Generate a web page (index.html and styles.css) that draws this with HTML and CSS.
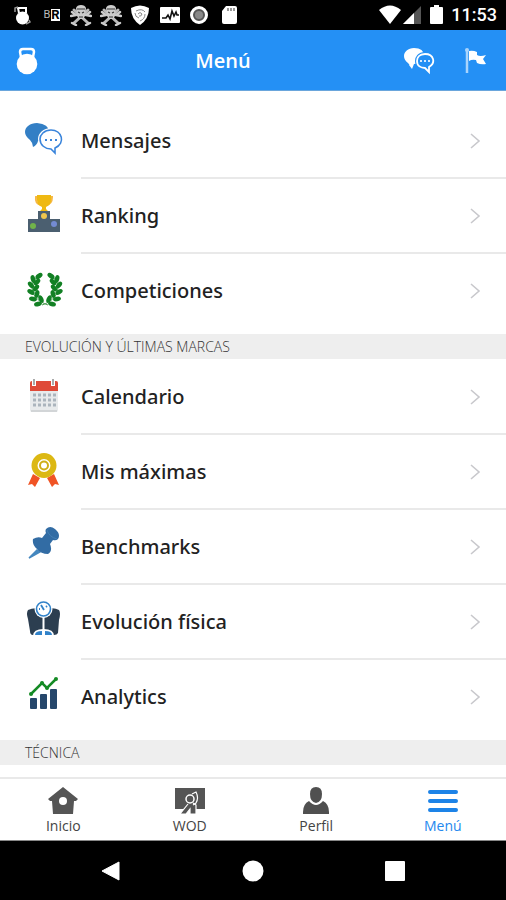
FILE: index.html
```html
<!DOCTYPE html>
<html lang="es">
<head>
<meta charset="utf-8">
<meta name="viewport" content="width=device-width, initial-scale=1">
<title>Menú</title>
<link rel="stylesheet" href="styles.css">
</head>
<body>
<svg class="defs" aria-hidden="true">
  <symbol id="chevron" viewBox="0 0 12 18"><path d="M2 2l8 7-8 7" fill="none" stroke="#c8c8cc" stroke-width="1.6"/></symbol>
  <symbol id="skull" viewBox="0 0 22 22">
    <path d="M4 6l14 13M18 6L4 19" stroke="#bbb" stroke-width="3" stroke-linecap="round"/>
    <path d="M2 8l4 3M20 8l-4 3M1 12l5-1M21 12l-5-1M2 19l4 2M20 19l-4 2" stroke="#ccc" stroke-width="2.500" stroke-linecap="round"/>
    <path d="M6 4q1-3 5-3t5 3l-1 8-2 3H9l-2-3z" fill="#ccc"/>
    <path d="M7 5h8M8 8l2 1M14 8l-2 1M9 13h4" stroke="#333" stroke-width="1.200"/>
  </symbol>
</svg>

<div class="status">
  <div class="status-apps">
    <svg viewBox="0 0 22 22"><path d="M8 9L7 4h8v5" fill="none" stroke="#fff" stroke-width="2"/><circle cx="11.500" cy="14" r="6.500" fill="#fff"/><path d="M4 8V4l3-1M18 16l1 2-4 2" fill="none" stroke="#999" stroke-width="1.500"/></svg>
    <span class="badge-br"><span>B</span><b>R</b></span>
    <svg viewBox="0 0 22 22"><use href="#skull"/></svg>
    <svg viewBox="0 0 22 22"><use href="#skull"/></svg>
    <svg viewBox="0 0 22 22"><path d="M2 4q9-5 18 0 0 11-9 17Q2 15 2 4z" fill="#fff"/><path d="M7 7q6-3 9 1M16 10q0 5-5 7M6 9q0 4 4 5M9 10q2-3 4 0-1 3-3 2" fill="none" stroke="#888" stroke-width="1"/></svg>
    <svg viewBox="0 0 22 22"><rect x="1" y="3" width="20" height="16" rx="1" fill="#fff"/><path d="M3 14h4l2-3 2 4 2-8 2 5 2-4 1 3h2" fill="none" stroke="#111" stroke-width="1.600"/></svg>
    <svg viewBox="0 0 22 22"><circle cx="11" cy="11" r="7.500" fill="#555" stroke="#fff" stroke-width="3"/><circle cx="11" cy="11" r="4" fill="#888"/></svg>
    <svg viewBox="0 0 22 22"><path d="M8 2h9q2 0 2 2v14q0 2-2 2H6q-2 0-2-2V7z" fill="#fff"/><path d="M10 4v3M13 4v3M16 4v3" stroke="#777" stroke-width="1.500"/></svg>
  </div>
  <div class="status-system">
    <svg class="wifi" viewBox="0 0 22 20"><path d="M0 5q11-9 22 0L11 19z" fill="#fff"/></svg>
    <svg class="signal" viewBox="0 0 18 20"><path d="M18 1v18H0z" fill="#555"/><path d="M11 8v11H0z" fill="#fff"/></svg>
    <svg class="battery" viewBox="0 0 13 20"><path d="M4 0h5v2h3q1 0 1 1v15q0 1-1 1H1q-1 0-1-1V3q0-1 1-1h3z" fill="#fff"/></svg>
    <time>11:53</time>
  </div>
</div>

<header class="header">
  <button class="icon-button" aria-label="Entrenamiento"><svg class="kettle" viewBox="0 0 22 28"><path d="M5 10L4 5q0-3 3-3h8q3 0 3 3l-1 5" fill="none" stroke="#fff" stroke-width="2.500"/><circle cx="11" cy="17" r="10.300" fill="#fff"/></svg></button>
  <h1>Menú</h1>
  <button class="icon-button" aria-label="Mensajes"><svg class="chat" viewBox="0 0 31 28"><path d="M10 1C4 1 0 5 0 9q0 4 4 7 2 2 1 2l3 4 2-5q9 0 10-8 0-8-10-8z" fill="#fff"/><path d="M21 7c-6 0-8 4-8 7 0 5 4 7 8 7l4 4v-5c7-4 5-13-4-13z" fill="#2490f5" stroke="#2490f5" stroke-width="4"/><path d="M21 7c-6 0-8 4-8 7 0 5 4 7 8 7l4 4v-5c7-4 5-13-4-13z" fill="none" stroke="#fff" stroke-width="1.800"/><path d="M16 14h2M20 14h2M24 14h2" stroke="#d5eaff" stroke-width="2"/></svg></button>
  <button class="icon-button" aria-label="Marcas"><svg class="flag" viewBox="0 0 22 28"><path d="M2 3v23" stroke="#a9d4fc" stroke-width="2.500"/><circle cx="2" cy="3" r="2" fill="#a9d4fc"/><path d="M4 4q4-1 8 1v3q3 2 9 0l-3 4 3 5q-5 1-9-1l-1-3q-4-1-7 1z" fill="#fff"/></svg></button>
</header>

<main class="content">
  <ul class="menu">
    <li><a class="row" href="#mensajes">
      <svg class="pic" viewBox="0 0 38 38"><path d="M12 4C5 4 0 8 0 13q0 4 5 8 3 3 3 7 4-2 5-6 11-1 11-9 0-8-12-9z" fill="#337fc5"/><path d="M26 11c-7 0-11 5-11 9 0 6 5 10 11 10l4 4v-5c11-5 7-18-4-18z" fill="#fff" stroke="#fff" stroke-width="4"/><path d="M26 11c-7 0-11 5-11 9 0 6 5 10 11 10l4 4v-5c11-5 7-18-4-18z" fill="#fff" stroke="#3984db" stroke-width="1.600"/><path d="M20 21h2M25 21h2M30 21h2" stroke="#3984db" stroke-width="2"/></svg>
      <span class="label">Mensajes</span><svg class="chevron"><use href="#chevron"/></svg></a></li>
    <li><a class="row" href="#ranking">
      <svg class="pic" viewBox="0 0 38 38"><path d="M13 3h-2q-1 7 5 8M24 3h3q0 7-6 8" fill="none" stroke="#f6b846" stroke-width="2"/><path d="M12 1h14v5q0 5-5 7v2l3 3H14l3-3v-2q-5-2-5-7z" fill="#efb912"/><path d="M3 25h10v-8h12v8h10v13H3z" fill="#4b5f70"/><circle cx="19" cy="22" r="3" fill="#efc64e"/><circle cx="8" cy="32" r="3" fill="#71b34a"/><circle cx="29" cy="30" r="3" fill="#748bd2"/></svg>
      <span class="label">Ranking</span><svg class="chevron"><use href="#chevron"/></svg></a></li>
    <li><a class="row" href="#competiciones">
      <svg class="pic" viewBox="0 0 38 38">
        <g id="branch"><path d="M12 8C4 16 5 30 23 36" fill="none" stroke="#4a9b51"/>
          <g fill="#128024"><ellipse cx="14" cy="7" rx="4" ry="2.300" transform="rotate(-35 14 7)"/><ellipse cx="8" cy="10" rx="4" ry="2.300" transform="rotate(75 8 10)"/><ellipse cx="12" cy="13" rx="4" ry="2.300" transform="rotate(-45 12 13)"/><ellipse cx="6" cy="16" rx="4" ry="2.300" transform="rotate(50 6 16)"/><ellipse cx="11" cy="19" rx="4" ry="2.300" transform="rotate(-50 11 19)"/><ellipse cx="6" cy="23" rx="4" ry="2.300" transform="rotate(30 6 23)"/><ellipse cx="12" cy="25" rx="4" ry="2.300" transform="rotate(-75 12 25)"/><ellipse cx="8" cy="30" rx="4" ry="2.300" transform="rotate(10 8 30)"/><ellipse cx="16" cy="30" rx="4" ry="2.300" transform="rotate(65 16 30)"/><ellipse cx="13" cy="35" rx="4" ry="2.300" transform="rotate(-15 13 35)"/></g></g>
        <use href="#branch" transform="matrix(-1 0 0 1 40 0)"/></svg>
      <span class="label">Competiciones</span><svg class="chevron"><use href="#chevron"/></svg></a></li>
  </ul>

  <h2>EVOLUCIÓN Y ÚLTIMAS MARCAS</h2>
  <ul class="menu">
    <li><a class="row" href="#calendario">
      <svg class="pic" viewBox="0 0 38 38"><rect x="5" y="6" width="28" height="31" rx="2" fill="#e8ebec"/><path d="M5 16V8q0-2 2-2h24q2 0 2 2v8z" fill="#df4a38"/><path d="M9 4v7M28 4v7" stroke="#fff" stroke-width="4"/><path d="M9 4v6M28 4v6" stroke="#a9aaaa" stroke-width="2"/><path d="M8 20h23M8 25h23M8 30h23" stroke="#abb5bd" stroke-width="3" stroke-dasharray="3 2"/><path d="M6 36h26" stroke="#d2d5d7" stroke-width="2"/></svg>
      <span class="label">Calendario</span><svg class="chevron"><use href="#chevron"/></svg></a></li>
    <li><a class="row" href="#maximas">
      <svg class="pic" viewBox="0 0 38 38"><path d="M8 24l7 4-5 9-3-3-4 1zM29 24l-7 4 5 9 3-3 4 1z" fill="#f05425"/><circle cx="19" cy="15.500" r="9.500" fill="#fff" stroke="#dcb813" stroke-width="6"/><circle cx="19" cy="15.500" r="4" fill="#fff" stroke="#cfae18" stroke-width="2"/></svg>
      <span class="label">Mis máximas</span><svg class="chevron"><use href="#chevron"/></svg></a></li>
    <li><a class="row" href="#benchmarks">
      <svg class="pic" viewBox="0 0 38 38"><path d="M12 25L4 33l11-6z" fill="#4487bf" stroke="#4487bf" stroke-width="1.500"/><path d="M21 4q4-4 9 0 6 5 3 10-2 2-5 1l-3 4q3 7-2 10-7 0-11-5-5-4-4-10 5-3 9-1l4-5q-1-2 0-4z" fill="#326ca4"/><path d="M22 5q2 7 10 9" fill="none" stroke="#447fb3" stroke-width="1"/></svg>
      <span class="label">Benchmarks</span><svg class="chevron"><use href="#chevron"/></svg></a></li>
    <li><a class="row" href="#evolucion">
      <svg class="pic" viewBox="0 0 38 38"><path d="M3 10q6-3 13-1h6q7-2 12 1 2 3 0 10l-1 13q-1 2-4 2H8q-3 0-3-4L3 19q-2-6 0-9z" fill="#2c3e50"/><path d="M18.500 16v14" stroke="#fff" stroke-width="2"/><path d="M8 36q0-7 10.500-7T29 36z" fill="#fff"/><path d="M10 35q0-4 7-4v4zM20 35v-4q7 0 7 4z" fill="#3182c9"/><circle cx="18.500" cy="9" r="9" fill="#fff"/><circle cx="18.500" cy="9" r="7" fill="#fff" stroke="#3182c9" stroke-width="1.600"/><path d="M16 5l3 5M22 6l-1 1M14 9h1" stroke="#3182c9" stroke-width="1.800"/></svg>
      <span class="label">Evolución física</span><svg class="chevron"><use href="#chevron"/></svg></a></li>
    <li><a class="row" href="#analytics">
      <svg class="pic" viewBox="0 0 38 38"><rect x="5" y="23" width="7" height="11" rx="1" fill="#26476b"/><rect x="15" y="19" width="7" height="15" rx="1" fill="#26476b"/><rect x="25" y="14" width="7" height="20" rx="1" fill="#26476b"/><path d="M6 19L17 8l5 5L31 4" fill="none" stroke="#158b25" stroke-width="2.500"/><g fill="#158b25"><circle cx="6" cy="19" r="2"/><circle cx="17" cy="8" r="2"/><circle cx="22" cy="13" r="2"/><circle cx="31" cy="4" r="2"/></g></svg>
      <span class="label">Analytics</span><svg class="chevron"><use href="#chevron"/></svg></a></li>
  </ul>
  <h2>TÉCNICA</h2>
</main>

<nav class="tabs" aria-label="Principal">
  <a href="#inicio"><svg viewBox="0 0 32 30"><path d="M16 1l15 12-2 2h-2l-1 13H6L5 15H3l-2-2z" fill="#555"/><circle cx="16" cy="15" r="4" fill="#fff"/></svg>Inicio</a>
  <a href="#wod"><svg viewBox="0 0 32 30"><path d="M1 2h30v21H1z" fill="#555"/><path d="M14 18L6 28h6l4-5v5h6v-9l-3-2" fill="#555" stroke="#fff" stroke-width="1.200"/><circle cx="16" cy="13" r="4" fill="#555" stroke="#fff" stroke-width="1.500"/><path d="M18 8l4-2q3 6 0 11l-3 2" fill="none" stroke="#fff" stroke-width="1.200"/></svg>WOD</a>
  <a href="#perfil"><svg viewBox="0 0 32 30"><path d="M16 1q6 0 6 7 0 8-6 9-6-1-6-9 0-7 6-7z" fill="#505050"/><path d="M9 15q7 8 14 0 6 3 6 11v2H3v-2q0-8 6-11z" fill="#505050"/></svg>Perfil</a>
  <a class="active" href="#menu" aria-current="page"><svg viewBox="0 0 32 30"><path d="M3 6h26M3 15h26M3 24h26" stroke="#1d83e7" stroke-width="4" stroke-linecap="round"/></svg>Menú</a>
</nav>

<div class="system-nav">
  <button aria-label="Atrás"><svg viewBox="0 0 22 22"><path d="M19 2v18L2 11z" fill="#fff" stroke="#fff" stroke-linejoin="round"/></svg></button>
  <button aria-label="Pantalla de inicio"><svg viewBox="0 0 22 22"><circle cx="11" cy="11" r="10.500" fill="#fff"/></svg></button>
  <button aria-label="Recientes"><svg viewBox="0 0 22 22"><rect x="1" y="1" width="20" height="20" rx="1" fill="#fff"/></svg></button>
</div>
</body>
</html>
```
FILE: styles.css
```css
* { box-sizing: border-box; }
body {
  margin: 0;
  min-height: 100vh;
  display: flex;
  flex-direction: column;
  background: #fff;
  color: #222;
  font-family: "Open Sans", "Noto Sans", sans-serif;
}
svg { display: block; flex: none; }
a { color: inherit; text-decoration: none; }
button { padding: 0; border: 0; background: none; }
.defs { position: absolute; width: 0; height: 0; }

.status {
  display: flex;
  justify-content: space-between;
  align-items: center;
  height: 30px;
  padding: 0 9px 0 11px;
  background: #000;
  color: #fff;
}
.status-apps { display: flex; justify-content: space-between; width: 229px; }
.status-apps svg { width: 22px; height: 22px; }
.badge-br {
  display: flex;
  align-items: center;
  justify-content: center;
  width: 22px;
  font: 11px/12px Roboto, sans-serif;
}
.badge-br span { padding-right: 1px; color: #bbb; }
.badge-br b { background: #fff; color: #000; font-size: 13px; }
.status-system { display: flex; align-items: center; }
.wifi { width: 22px; height: 20px; }
.signal { width: 18px; height: 20px; margin: 0 9px 0 2px; }
.battery { width: 13px; height: 20px; margin-right: 8px; }
.status time { font: 500 18px/20px Roboto, sans-serif; }

.header {
  display: flex;
  align-items: center;
  height: 61px;
  padding: 2px 19px 0 16px;
  background: #2490f5;
  border-bottom: 1px solid #6aa6dc;
  color: #fff;
}
.header h1 { flex: 1; margin: 0; padding-left: 4px; font-size: 20px; font-weight: 600; line-height: 24px; text-align: center; }
.icon-button + .icon-button { margin-left: 30px; }
.kettle, .flag { width: 22px; height: 28px; }
.chat { width: 31px; height: 28px; }

.content { flex: 1; padding-top: 12px; }
.menu { margin: 0; padding: 0 0 6px; list-style: none; }
.row { display: flex; align-items: center; height: 75px; padding-left: 25px; }
.pic { width: 38px; height: 38px; margin: 0 18px 6px 0; }
.label { flex: 1; font-family: "Noto Sans", sans-serif; font-size: 20px; font-weight: 500; line-height: 24px; }
.chevron { width: 12px; height: 18px; margin-right: 25px; }
.menu li + li { position: relative; }
.menu li + li::before {
  content: "";
  position: absolute;
  top: -1px;
  left: 81px;
  right: 0;
  height: 2px;
  background: #e9e9e9;
}
h2 {
  margin: 0;
  padding: 0 25px;
  background: #eee;
  color: #333;
  font-size: 14px;
  font-weight: 300;
  line-height: 25px;
}

.tabs {
  display: grid;
  grid-template-columns: repeat(4, 1fr);
  height: 64px;
  padding-top: 7px;
  border-top: 2px solid #e9e9e9;
  border-bottom: 1px solid #888;
  color: #444;
}
.tabs a { display: flex; flex-direction: column; align-items: center; font-size: 14px; line-height: 20px; }
.tabs svg { width: 32px; height: 30px; }
.tabs .active { color: #2488ee; }

.system-nav {
  display: grid;
  grid-template-columns: repeat(3, 1fr);
  height: 59px;
  padding: 0 8%;
  background: #000;
}
.system-nav button { display: flex; align-items: center; justify-content: center; }
.system-nav svg { width: 22px; height: 22px; }
```
